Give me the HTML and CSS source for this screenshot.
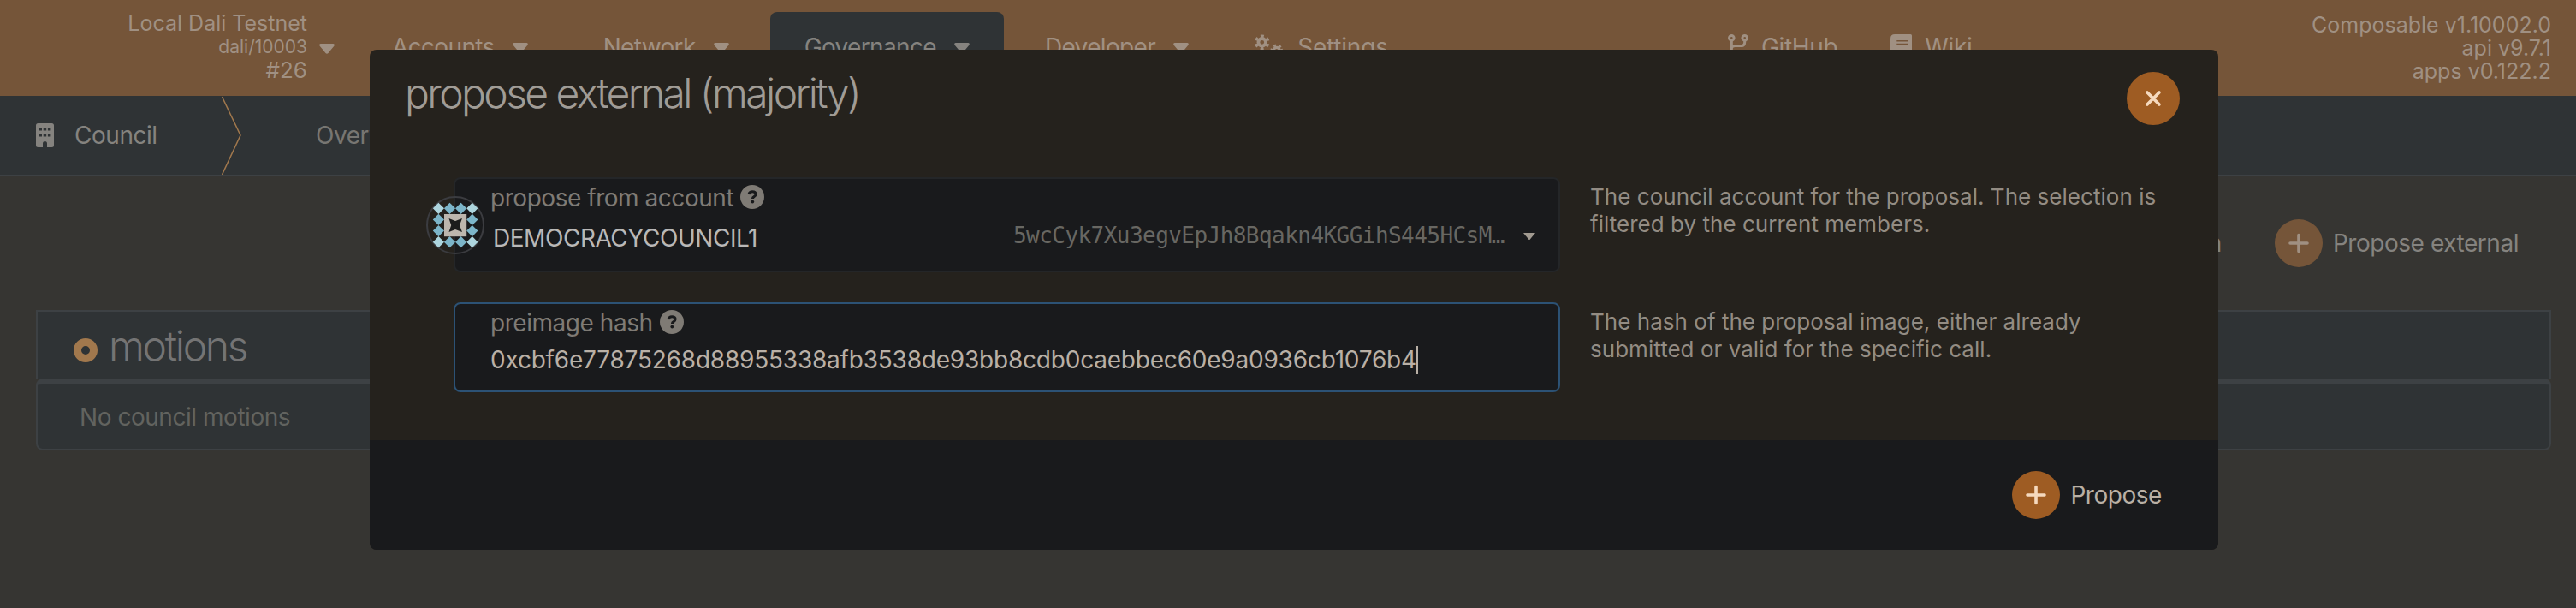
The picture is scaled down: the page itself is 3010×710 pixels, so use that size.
FILE: index.html
```html
<!DOCTYPE html>
<html lang="en">
<head>
<meta charset="utf-8">
<title>Council</title>
<link rel="stylesheet" href="styles.css">
</head>
<body>
<div class="page">
  <header class="topbar">
    <div class="chain">
      <div class="chain-text">
        <div class="chain-name">Local Dali Testnet</div>
        <div class="chain-spec">dali/10003</div>
        <div class="chain-best">#26</div>
      </div>
      <svg class="caret" viewBox="0 0 18 12"><path d="M1.500 0h15q2 .6 1 2.400l-7 8.600q-1.500 1.500-3 0l-7-8.600q-1-1.800 1-2.400z"/></svg>
    </div>
    <nav class="menu">
      <div class="menu-item"><span>Accounts</span><svg class="caret" viewBox="0 0 18 12"><path d="M1.500 0h15q2 .6 1 2.400l-7 8.600q-1.500 1.500-3 0l-7-8.600q-1-1.800 1-2.400z"/></svg></div>
      <div class="menu-item"><span>Network</span><svg class="caret" viewBox="0 0 18 12"><path d="M1.500 0h15q2 .6 1 2.400l-7 8.600q-1.500 1.500-3 0l-7-8.600q-1-1.800 1-2.400z"/></svg></div>
      <div class="menu-item active"><span>Governance</span><svg class="caret" viewBox="0 0 18 12"><path d="M1.500 0h15q2 .6 1 2.400l-7 8.600q-1.500 1.500-3 0l-7-8.600q-1-1.800 1-2.400z"/></svg></div>
      <div class="menu-item"><span>Developer</span><svg class="caret" viewBox="0 0 18 12"><path d="M1.500 0h15q2 .6 1 2.400l-7 8.600q-1.500 1.500-3 0l-7-8.600q-1-1.800 1-2.400z"/></svg></div>
      <div class="menu-link settings">
        <svg class="cogs" viewBox="0 0 35 28"><g fill="none" stroke="currentColor"><circle cx="8.700" cy="9.300" r="4.300" stroke-width="3.800"/><circle cx="8.700" cy="9.300" r="7.200" stroke-width="3.200" stroke-dasharray="3.770 3.770" transform="rotate(15 8.700 9.300)"/><circle cx="25.700" cy="18.700" r="3.400" stroke-width="3.200"/><circle cx="25.700" cy="18.700" r="5.800" stroke-width="2.800" stroke-dasharray="3.037 3.037" transform="rotate(-15 25.700 18.700)"/></g></svg>
        <span>Settings</span>
      </div>
    </nav>
    <div class="external">
      <div class="menu-link github"><svg class="branch" viewBox="0 0 24 28"><g fill="none" stroke="currentColor" stroke-width="3"><circle cx="4.300" cy="4.300" r="2.800"/><circle cx="19.700" cy="4.300" r="2.800"/><circle cx="4.300" cy="23.700" r="2.800"/><path d="M4.300 7v14M19.700 7v2q0 4.500-4 4.500h-7q-4.400 0-4.400 4"/></g></svg><span>GitHub</span></div>
      <div class="menu-link wiki"><svg class="book" viewBox="0 0 25 28"><path fill-rule="evenodd" d="M5 0h18.500q1.500 0 1.500 1.500v18.500q0 1-1 1.700v3q1 .3 1 1.300v.5q0 1.500-1.500 1.500H5q-5 0-5-5V5q0-5 5-5zM7.300 7v1.500h12.700V7zM7.300 10.800v1.500h12.700v-1.500zM5 21.500q-1.500 0-1.500 1.500t1.500 1.500h16v-3z"/></svg><span>Wiki</span></div>
    </div>
    <div class="versions">
      <div>Composable v1.10002.0</div>
      <div>api v9.7.1</div>
      <div>apps v0.122.2</div>
    </div>
  </header>
  <div class="tabs">
    <svg class="building" viewBox="0 0 21 28"><path fill-rule="evenodd" d="M2.500 0h16q2.500 0 2.500 2.500v23q0 2.500-2.500 2.500H13v-4.500q0-2.500-2.500-2.500T8 23.500v4.500H2.500Q0 28 0 25.500v-23Q0 0 2.500 0zM3.500 5.200v3.300h3.500V5.200zm5.200 0v3.300h3.500V5.200zm5.200 0v3.300h3.500V5.200zM3.500 12.200v3.300h3.500v-3.300zm5.200 0v3.300h3.500v-3.300zm5.200 0v3.300h3.500v-3.300z"/></svg>
    <span class="tab-title">Council</span>
    <svg class="arrow" viewBox="0 0 24 92"><path d="M.5 1L22 46L.5 92" fill="none" stroke="#a1784d" stroke-width="1.500"/></svg>
    <span class="tab">Overview</span>
  </div>
  <main class="content">
    <div class="actions">
      <div class="action"><svg class="plus dim" viewBox="0 0 56 56"><circle cx="28" cy="28" r="28"/><path d="M28 18.500v19M18 28h20"/></svg><span>Propose motion</span></div>
      <div class="action"><svg class="plus dim" viewBox="0 0 56 56"><circle cx="28" cy="28" r="28"/><path d="M28 18.500v19M18 28h20"/></svg><span>Propose external</span></div>
    </div>
    <section class="table">
      <div class="table-head"><i class="ring"></i><h1>motions</h1></div>
      <div class="table-body">No council motions</div>
    </section>
  </main>
</div>

<div class="modal">
  <div class="modal-head">
    <h1>propose external (majority)</h1>
    <svg class="close" viewBox="0 0 62 62"><circle cx="31" cy="31" r="31"/><path d="M24 24l14 14M38 24l-14 14"/></svg>
  </div>
  <div class="modal-body">
    <div class="row">
      <div class="field">
        <svg class="identicon" viewBox="-34 -34 68 68">
          <circle r="33" fill="none" stroke="#3b3c40" stroke-width="2"/>
          <g fill="#7cb5c9">
            <path id="gem" d="M-6.500-26.300l6.600 6.600-6.600 6.600-6.600-6.600z"/>
            <use href="#gem" x="13.100"/><use href="#gem" y="39.400"/><use href="#gem" x="13.100" y="39.400"/>
            <use href="#gem" x="-13.100" y="13.100"/><use href="#gem" x="-13.100" y="26.300"/>
            <use href="#gem" x="26.300" y="13.100"/><use href="#gem" x="26.300" y="26.300"/>
          </g>
          <path fill="#add5de" d="M-19.600-26.300l6.600 6.600-6.600 6.600-6.600-6.600zM19.800-26.300l6.600 6.600-6.600 6.600-6.600-6.600zM-19.600 13.100l6.600 6.600-6.600 6.600-6.600-6.600zM19.800 13.100l6.600 6.600-6.600 6.600-6.600-6.600z"/>
          <path fill="#bdb6ad" d="M-13-13h26.200v26.200h-26.200z"/>
          <path fill="#1c1c1c" d="M-7.500-8L-4.800 0L-7.500 8L0 5L8 8L5 0L8-8L0-5z"/>
        </svg>
        <div class="label"><span>propose from account</span><svg class="help" viewBox="0 0 28 28"><circle cx="14" cy="14" r="14"/><path d="M10 11q.5-3.300 4.200-3.300 3.900 0 3.900 3 0 1.800-2 2.900-1.700.9-1.700 2.400"/><circle class="dot" cx="14.300" cy="19.600" r="1.900"/></svg></div>
        <div class="account">
          <span class="name">DEMOCRACYCOUNCIL1</span>
          <span class="address">5wcCyk7Xu3egvEpJh8Bqakn4KGGihS445HCsM…</span>
          <svg class="drop" viewBox="0 0 14 8"><path d="M0 0h14L7 8.500z"/></svg>
        </div>
      </div>
      <p class="hint">The council account for the proposal. The selection is<br>filtered by the current members.</p>
    </div>
    <div class="row">
      <div class="field focused">
        <div class="label"><span>preimage hash</span><svg class="help" viewBox="0 0 28 28"><circle cx="14" cy="14" r="14"/><path d="M10 11q.5-3.300 4.200-3.300 3.900 0 3.900 3 0 1.800-2 2.900-1.700.9-1.700 2.400"/><circle class="dot" cx="14.300" cy="19.600" r="1.900"/></svg></div>
        <div class="input"><span class="value">0xcbf6e77875268d88955338afb3538de93bb8cdb0caebbec60e9a0936cb1076b4</span><i class="cursor"></i></div>
      </div>
      <p class="hint">The hash of the proposal image, either already<br>submitted or valid for the specific call.</p>
    </div>
  </div>
  <div class="modal-foot">
    <svg class="plus" viewBox="0 0 56 56"><circle cx="28" cy="28" r="28"/><path d="M28 18.500v19M18 28h20"/></svg>
    <span>Propose</span>
  </div>
</div>
</body>
</html>
```

FILE: styles.css
```css
* { box-sizing: border-box; }
body {
  margin: 0;
  width: 3010px;
  height: 710px;
  overflow: hidden;
  position: relative;
  background: #363532;
  font: 28px/34px Inter, "Liberation Sans", sans-serif;
  letter-spacing: -.46px;
  white-space: nowrap;
}
h1 { margin: 0; font-size: 48px; font-weight: 300; line-height: 56px; letter-spacing: -2.6px; }
p { margin: 0; }
svg { display: block; flex: none; fill: currentColor; }
span { display: inline-block; }

.topbar {
  display: flex;
  height: 112px;
  background: #755539;
  color: #a09082;
}
.chain { display: flex; width: 418px; letter-spacing: 0; }
.chain-text { width: 359px; padding-top: 13px; text-align: right; font-size: 25px; line-height: 28px; }
.chain-spec { font-size: 21px; line-height: 27px; }
.chain-best { font-size: 26px; }
.chain .caret { margin: 51px 0 0 14px; }
.caret { width: 18px; height: 12px; }
.menu { display: flex; gap: 8px; padding-top: 14px; width: 1601px; }
.menu-item {
  display: flex;
  gap: 21px;
  height: 84px;
  padding: 24px 40px 0;
  border-radius: 8px;
  letter-spacing: -.65px;
}
.menu-item .caret { margin-top: 12px; }
.menu-item.active { background: #2f3335; color: #85837f; }
.menu-link { display: flex; gap: 15px; padding-top: 24px; letter-spacing: -.2px; }
.menu-link svg { height: 28px; margin-top: 2px; }
.settings { margin-left: 29px; }
.cogs { width: 35px; }
.external { display: flex; gap: 62px; padding-top: 14px; }
.branch { width: 24px; }
.book { width: 25px; }
.github, .wiki { letter-spacing: -.35px; }
.versions {
  margin-left: auto;
  padding: 16px 29px 0 0;
  text-align: right;
  font-size: 25px;
  line-height: 27px;
  letter-spacing: 0;
}

.tabs {
  display: flex;
  height: 94px;
  border-bottom: 2px solid #3d4144;
  background: #2f3335;
  color: #85837f;
}
.building { width: 21px; height: 28px; margin: 32px 24px 0 42px; }
.tab-title { width: 172px; padding-top: 29px; }
.arrow { width: 24px; height: 92px; }
.tab { padding: 29px 0 0 86px; color: #777672; }

.actions {
  display: flex;
  justify-content: flex-end;
  gap: 62px;
  height: 156px;
  padding: 50px 67px 0 0;
  color: #85837f;
}
.action { display: flex; gap: 12px; line-height: 56px; }
.plus { width: 56px; height: 56px; }
.plus circle, .close circle { fill: #9e5c23; }
.plus path, .close path { stroke: #f5d9be; stroke-width: 3.6; stroke-linecap: round; fill: none; }
.plus.dim circle { fill: #755539; }
.plus.dim path { stroke: #a09082; }
.table { margin: 0 29px 0 42px; }
.table-head {
  display: flex;
  gap: 13px;
  height: 80px;
  padding-left: 42px;
  border: 2px solid #3d4144;
  border-bottom: 0;
  background: #2f3335;
  color: #747474;
}
.table-head h1 { padding-top: 12px; letter-spacing: -2.3px; }
.ring { width: 28px; height: 28px; margin-top: 31px; border: 9px solid #a1784d; border-radius: 50%; }
.table-body {
  height: 84px;
  padding: 21px 0 0 49px;
  border: 2px solid #3d4144;
  border-top-width: 7px;
  border-radius: 8px;
  background: #2f3335;
  color: #62635f;
}

.modal {
  position: absolute;
  left: 432px;
  top: 58px;
  width: 2160px;
  height: 584px;
  overflow: hidden;
  border-radius: 8px;
  background: #25221d;
}
.modal-head {
  display: flex;
  justify-content: space-between;
  height: 149px;
  padding: 22px 45px 0 41px;
  color: #a09c96;
}
.modal-head h1 { padding-top: 1px; }
.close { width: 62px; height: 62px; margin-top: 4px; }
.modal-body { height: 307px; padding-left: 98px; }
.row { display: flex; gap: 35px; height: 146px; }
.field {
  position: relative;
  width: 1293px;
  height: 111px;
  padding: 4px 26px 0 42px;
  border: 2px solid #242628;
  border-radius: 8px;
  background: #191a1c;
}
.focused { height: 105px; border-color: #2c5275; }
.identicon { position: absolute; left: -34px; top: 20px; width: 68px; height: 68px; }
.label { display: flex; gap: 8px; margin-left: -1px; color: #7f7b75; line-height: 36px; }
.help { width: 28px; height: 28px; margin-top: 3px; }
.help path { fill: none; stroke: #191a1c; stroke-width: 3; }
.help .dot { fill: #191a1c; }
.account { display: flex; padding: 9px 0 0 2px; line-height: 40px; }
.name { width: 608px; color: #b9b8b7; }
.address {
  width: 596px;
  margin-top: -3px;
  color: #686762;
  font: 26px/40px "DejaVu Sans Mono", monospace;
  letter-spacing: -.55px;
}
.drop { width: 14px; height: 8px; margin-top: 14px; color: #a19a90; }
.input { display: flex; margin-left: -1px; padding-top: 9px; line-height: 33px; color: #b9b0a6; }
.value { letter-spacing: -.21px; }
.cursor { width: 2px; height: 33px; background: #b9b0a6; }
.hint { padding-top: 7px; font-size: 26px; line-height: 32px; letter-spacing: .03px; color: #938c83; }
.modal-foot {
  display: flex;
  justify-content: flex-end;
  gap: 12px;
  height: 128px;
  padding: 36px 66px 0 0;
  background: #191a1c;
  color: #bab0a5;
  line-height: 56px;
}
```
